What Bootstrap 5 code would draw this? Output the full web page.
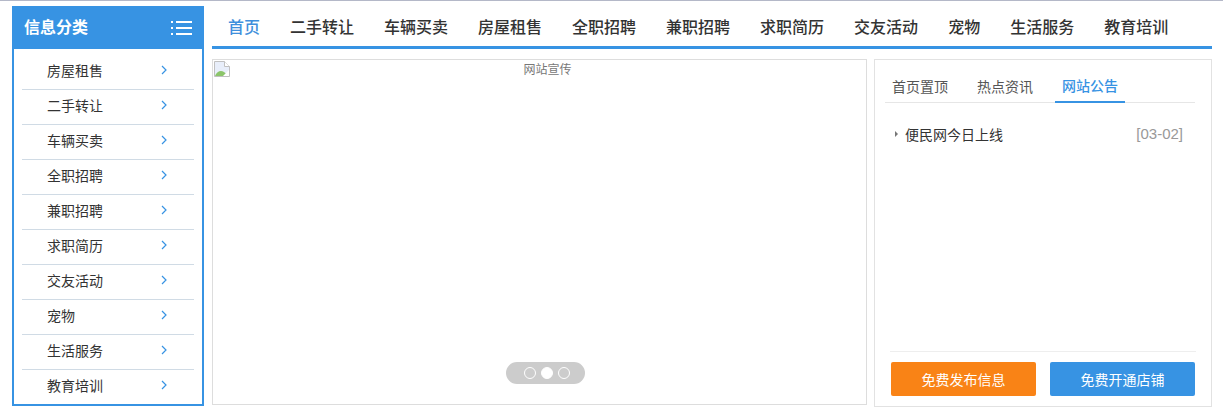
<!DOCTYPE html>
<html lang="zh">
<head>
<meta charset="utf-8">
<title>便民网</title>
<link rel="stylesheet" href="https://cdn.jsdelivr.net/npm/bootstrap@5.3.0/dist/css/bootstrap.min.css">
<style>
html,body{height:418px;overflow:hidden;background:#fff}
body{font-family:"Noto Sans CJK SC","Liberation Sans",sans-serif;color:#333;font-size:14px;border-top:1px solid #b4b8c8}
.page-wrap{padding:5px 0 0 12px;gap:8px}
.side-box{width:192px;height:400px;border:2px solid #3793e3;flex:none}
.side-head{height:41px;background:#3793e3;color:#fff;font-size:16px;font-weight:700;padding:0 10px 3px 10px;margin:0}
.side-head span{margin-top:-2px}
.side-list{padding:6px 8px 0;margin:0;list-style:none}
.side-list li{height:35px;border-bottom:1px solid #d0dbe5;padding:0 27px 3px 25px;color:#333;font-size:14px}
.side-list li:last-child{border-bottom-color:transparent}
.side-list svg{margin-top:-2px}
.main-col{width:1000px;flex:none}
.top-nav{height:43px;border-bottom:3px solid #3793e3;padding:0 0 0 16px;gap:30px;font-size:16px;font-weight:500;color:#333;margin-bottom:10px}
.top-nav .on{color:#3f8fdc}
.banner-box{width:655px;height:346px;border:1px solid #ddd;flex:none;padding-left:16px}
.broken-ico{position:absolute;left:1px;top:1px}
.alt-txt{font-size:12px;color:#777;line-height:18px}
.dots-pill{position:absolute;left:293px;bottom:20px;width:79px;height:22px;border-radius:11px;background:#ccc;gap:5px;padding-left:2px}
.dot-o{width:12px;height:12px;border-radius:50%;border:1px solid #fff}
.dot-f{background:#fff}
.notice-box{width:338px;height:348px;border:1px solid #e2e2e2;margin-left:7px;padding:0 16px 0 10px;flex:none}
.tab-row{margin-top:10px;height:33px;border-bottom:1px solid #e6e6e6;font-size:14px;color:#555;gap:15px}
.tab-item{width:70px;height:33px;padding-top:6px;line-height:20px;text-align:center}
.tab-item.on{color:#3793e3;font-weight:500;border-bottom:2px solid #3793e3;padding-top:5px}
.notice-line{padding:19px 12px 0 10px;font-size:14px;line-height:24px;color:#333}
.tri{width:0;height:0;border-left:3px solid #777;border-top:3px solid transparent;border-bottom:3px solid transparent;margin-right:7px}
.date-txt{color:#999;font-family:"Liberation Sans",sans-serif;font-size:15px}
.foot-row{border-top:1px solid #eee;margin:0 -1px 10px 5px;padding:10px 1px 0 1px}
.act-btn{width:145px;height:34px;border-radius:2px;border:0;color:#fff;font-size:14px;padding:0;line-height:34px}
.act-orange{background:#f98316}
.act-orange:hover{background:#f98316;color:#fff}
.act-blue{background:#3793e3}
.act-blue:hover{background:#3793e3;color:#fff}
</style>
</head>
<body>
<div class="d-flex page-wrap">
  <aside class="side-box">
    <div class="side-head d-flex align-items-center justify-content-between">
      <span>信息分类</span>
      <svg width="21" height="15" viewBox="0 0 21 15" fill="#fff"><rect x="0" y="1" width="2" height="2"/><rect x="5" y="1" width="16" height="2"/><rect x="0" y="7" width="2" height="2"/><rect x="5" y="7" width="16" height="2"/><rect x="0" y="13" width="2" height="2"/><rect x="5" y="13" width="16" height="2"/></svg>
    </div>
    <ul class="side-list">
      <li class="d-flex align-items-center justify-content-between"><span>房屋租售</span><svg width="6" height="10" viewBox="0 0 6 10"><path d="M1 1l4 4-4 4" fill="none" stroke="#3793e3" stroke-width="1.2"/></svg></li>
      <li class="d-flex align-items-center justify-content-between"><span>二手转让</span><svg width="6" height="10" viewBox="0 0 6 10"><path d="M1 1l4 4-4 4" fill="none" stroke="#3793e3" stroke-width="1.2"/></svg></li>
      <li class="d-flex align-items-center justify-content-between"><span>车辆买卖</span><svg width="6" height="10" viewBox="0 0 6 10"><path d="M1 1l4 4-4 4" fill="none" stroke="#3793e3" stroke-width="1.2"/></svg></li>
      <li class="d-flex align-items-center justify-content-between"><span>全职招聘</span><svg width="6" height="10" viewBox="0 0 6 10"><path d="M1 1l4 4-4 4" fill="none" stroke="#3793e3" stroke-width="1.2"/></svg></li>
      <li class="d-flex align-items-center justify-content-between"><span>兼职招聘</span><svg width="6" height="10" viewBox="0 0 6 10"><path d="M1 1l4 4-4 4" fill="none" stroke="#3793e3" stroke-width="1.2"/></svg></li>
      <li class="d-flex align-items-center justify-content-between"><span>求职简历</span><svg width="6" height="10" viewBox="0 0 6 10"><path d="M1 1l4 4-4 4" fill="none" stroke="#3793e3" stroke-width="1.2"/></svg></li>
      <li class="d-flex align-items-center justify-content-between"><span>交友活动</span><svg width="6" height="10" viewBox="0 0 6 10"><path d="M1 1l4 4-4 4" fill="none" stroke="#3793e3" stroke-width="1.2"/></svg></li>
      <li class="d-flex align-items-center justify-content-between"><span>宠物</span><svg width="6" height="10" viewBox="0 0 6 10"><path d="M1 1l4 4-4 4" fill="none" stroke="#3793e3" stroke-width="1.2"/></svg></li>
      <li class="d-flex align-items-center justify-content-between"><span>生活服务</span><svg width="6" height="10" viewBox="0 0 6 10"><path d="M1 1l4 4-4 4" fill="none" stroke="#3793e3" stroke-width="1.2"/></svg></li>
      <li class="d-flex align-items-center justify-content-between"><span>教育培训</span><svg width="6" height="10" viewBox="0 0 6 10"><path d="M1 1l4 4-4 4" fill="none" stroke="#3793e3" stroke-width="1.2"/></svg></li>
    </ul>
  </aside>
  <main class="main-col">
    <nav class="top-nav d-flex align-items-center">
      <span class="on">首页</span><span>二手转让</span><span>车辆买卖</span><span>房屋租售</span><span>全职招聘</span><span>兼职招聘</span><span>求职简历</span><span>交友活动</span><span>宠物</span><span>生活服务</span><span>教育培训</span>
    </nav>
    <div class="d-flex">
      <section class="banner-box position-relative text-center">
        <svg class="broken-ico" width="16" height="16" viewBox="0 0 16 16"><path d="M.5.5h10l5 5v10H.5z" fill="#e8eefa" stroke="#c0c0c0"/><path d="M1 15c2-5 6-6 9-4l5 4z" fill="#8cc56a"/><path d="M10.5.5v5h5" fill="#fff" stroke="#c0c0c0"/><path d="M9 15l6-6v6z" fill="#fff"/></svg>
        <div class="alt-txt">网站宣传</div>
        <div class="dots-pill d-flex align-items-center justify-content-center">
          <span class="dot-o"></span><span class="dot-o dot-f"></span><span class="dot-o"></span>
        </div>
      </section>
      <section class="notice-box d-flex flex-column">
        <div class="tab-row d-flex">
          <div class="tab-item">首页置顶</div>
          <div class="tab-item">热点资讯</div>
          <div class="tab-item on">网站公告</div>
        </div>
        <div class="notice-line d-flex align-items-center">
          <span class="tri"></span><span>便民网今日上线</span><span class="date-txt ms-auto">[03-02]</span>
        </div>
        <div class="foot-row d-flex justify-content-between mt-auto">
          <button type="button" class="btn act-btn act-orange">免费发布信息</button>
          <button type="button" class="btn act-btn act-blue">免费开通店铺</button>
        </div>
      </section>
    </div>
  </main>
</div>
<script src="https://cdn.jsdelivr.net/npm/bootstrap@5.3.0/dist/js/bootstrap.bundle.min.js"></script>
</body>
</html>
